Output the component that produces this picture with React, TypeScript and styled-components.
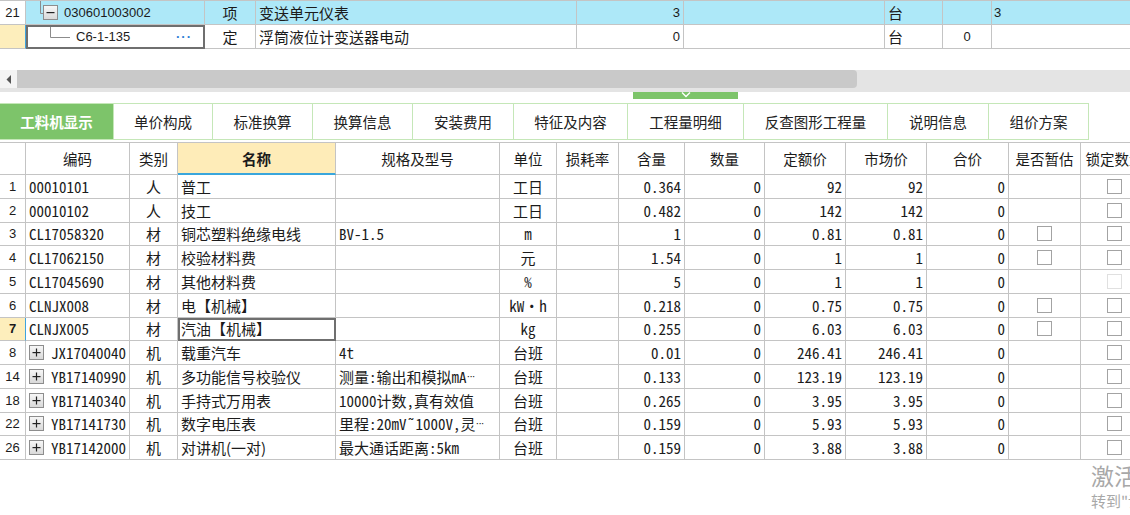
import React from "react";
import styled, { createGlobalStyle } from "styled-components";

const LINE = "#c4c4c4";
const CJK = `"Noto Sans CJK SC", sans-serif`;
const LATIN = `"Liberation Sans", "Noto Sans CJK SC", sans-serif`;
const MONO = `"Noto Sans Mono CJK SC", "Noto Sans CJK SC", monospace`;

type Align = "left" | "center" | "right";
type Font = "cjk" | "latin" | "mono";

const fontOf = (f?: Font) => (f === "latin" ? LATIN : f === "mono" ? MONO : CJK);
const sizeOf = (f?: Font) => (f === "latin" ? "13px" : "15px");
const justify = (a?: Align) => (a === "center" ? "center" : a === "right" ? "flex-end" : "flex-start");

const GlobalStyle = createGlobalStyle`
  html, body { margin: 0; padding: 0; background: #fff; }
  body { font-family: ${CJK}; color: #1b1b1b; }
`;

const Page = styled.div`
  position: relative;
  width: 1130px;
  height: 515px;
  overflow: hidden;
  background: #fff;
`;

/* ---------- upper grid (bill items) ---------- */

const TOP_COLS = "26px 179px 51px 321px 107px 201px 58px 49px 160px";

const TopGrid = styled.div`
  border-top: 1px solid ${LINE};
`;

const TopRow = styled.div<{ $active?: boolean }>`
  display: grid;
  grid-template-columns: ${TOP_COLS};
  height: 24px;
  background: ${(p) => (p.$active ? "#ade8f8" : "#fff")};
`;

const Cell = styled.div<{ $align?: Align; $font?: Font; $bold?: boolean }>`
  box-sizing: border-box;
  display: flex;
  align-items: center;
  justify-content: ${(p) => justify(p.$align)};
  padding: 0 3px;
  border-right: 1px solid ${LINE};
  border-bottom: 1px solid ${LINE};
  white-space: nowrap;
  overflow: hidden;
  font-family: ${(p) => fontOf(p.$font)};
  font-size: ${(p) => sizeOf(p.$font)};
  font-weight: ${(p) => (p.$bold ? 700 : 400)};
  line-height: 1;
`;

const RowNo = styled(Cell)<{ $current?: boolean }>`
  justify-content: center;
  padding: 0;
  font-family: ${LATIN};
  font-size: 13px;
  background: ${(p) => (p.$current ? "#fdeebc" : "#fff")};
  border-right: 1px solid ${(p) => (p.$current ? "#3ea3de" : LINE)};
  font-weight: ${(p) => (p.$current ? 700 : 400)};
`;

const Focused = styled(Cell)`
  outline: 2px solid #6f6f6f;
  outline-offset: -2px;
`;

const TreeCell = styled(Cell)`
  padding: 0;
`;

const MoreDots = styled.span`
  margin-left: auto;
  margin-right: 12px;
  color: #2f7fd6;
  font-family: ${LATIN};
  font-weight: 700;
  font-size: 13px;
  letter-spacing: 1px;
`;

const Ellipsis = styled.span`
  font-family: ${LATIN};
  font-size: 11px;
  letter-spacing: -1px;
`;

const ExpandBox = styled.span`
  box-sizing: border-box;
  width: 15px;
  height: 15px;
  flex: none;
  border: 1px solid #8d8d8d;
  background: linear-gradient(#f7f7f7, #d9d9d9);
  display: flex;
  align-items: center;
  justify-content: center;
  color: #222;
`;

const SignIcon = ({ minus }: { minus?: boolean }) => (
  <svg width="9" height="9" viewBox="0 0 9 9">
    <rect x="0.5" y="4" width="8" height="1.2" fill="#222" />
    {!minus && <rect x="3.9" y="0.5" width="1.2" height="8" fill="#222" />}
  </svg>
);

/* ---------- scrollbar / splitter ---------- */

const HScroll = styled.div`
  margin-top: 21px;
  height: 22px;
  background: #e4e4e4;
  display: flex;
  align-items: flex-start;
`;

const ScrollArrow = styled.div`
  width: 17px;
  height: 18px;
  background: #f4f4f4;
  display: flex;
  align-items: center;
  justify-content: center;
`;

const ScrollThumb = styled.div`
  width: 840px;
  height: 18px;
  background: #c9c9c9;
  border-radius: 0 4px 4px 0;
`;

const Splitter = styled.div`
  height: 11px;
  display: flex;
  align-items: flex-start;
`;

const SplitHandle = styled.div`
  margin-left: 633px;
  width: 105px;
  height: 7px;
  background: #7dc46a;
  display: flex;
  justify-content: center;
`;

/* ---------- tabs ---------- */

const TabStrip = styled.div`
  display: flex;
  height: 37px;
`;

const Tab = styled.div<{ $w: number; $active?: boolean }>`
  box-sizing: border-box;
  width: ${(p) => p.$w}px;
  height: 37px;
  display: flex;
  align-items: center;
  justify-content: center;
  border: 1px solid #c5e7b8;
  border-left: none;
  background: ${(p) => (p.$active ? "#7dc46a" : "#fff")};
  color: ${(p) => (p.$active ? "#fff" : "#222")};
  font-weight: ${(p) => (p.$active ? 700 : 400)};
  font-size: 14.5px;
  white-space: nowrap;
`;

/* ---------- resource grid ---------- */

const LOW_COLS = "26px 104px 48px 158px 164px 57px 62px 66px 80px 81px 81px 82px 72px 68px";

const Table = styled.div`
  margin-top: 2px;
  width: 1149px;
`;

const HeadRow = styled.div`
  display: grid;
  grid-template-columns: ${LOW_COLS};
  height: 33px;
  box-sizing: border-box;
  border-top: 1px solid ${LINE};
`;

const HeadCell = styled.div<{ $hot?: boolean }>`
  box-sizing: border-box;
  display: flex;
  align-items: center;
  justify-content: center;
  border-right: 1px solid ${LINE};
  border-bottom: ${(p) => (p.$hot ? "2px solid #3aa6dc" : `1px solid ${LINE}`)};
  background: ${(p) => (p.$hot ? "#feecb8" : "#fff")};
  font-weight: ${(p) => (p.$hot ? 700 : 400)};
  font-size: 14.5px;
  white-space: nowrap;
  overflow: hidden;
`;

const DataRow = styled.div`
  display: grid;
  grid-template-columns: ${LOW_COLS};
  height: 23.75px;
`;

const CodeCell = styled(Cell)`
  gap: 7px;
`;

const CheckBox = styled.span<{ $dim?: boolean }>`
  box-sizing: border-box;
  width: 15px;
  height: 15px;
  border: 1px solid ${(p) => (p.$dim ? "#e0e0e0" : "#a3a3a3")};
  background: #fff;
`;

const Watermark = styled.div`
  position: absolute;
  left: 1091px;
  top: 459px;
  color: #a8a8a8;
  white-space: nowrap;
  pointer-events: none;
`;

const WmTitle = styled.div`
  font-size: 23px;
  line-height: 32px;
`;

const WmSub = styled.div`
  font-size: 15px;
  line-height: 20px;
`;

type Res = {
  no: string;
  code: string;
  tree?: boolean;
  kind: string;
  name: string;
  spec?: string;
  more?: boolean;
  unit: string;
  qty: string;
  price: string;
  est?: boolean;
  lock?: "on" | "dim";
};

const resources: Res[] = [
  { no: "1", code: "00010101", kind: "人", name: "普工", unit: "工日", qty: "0.364", price: "92" },
  { no: "2", code: "00010102", kind: "人", name: "技工", unit: "工日", qty: "0.482", price: "142" },
  { no: "3", code: "CL17058320", kind: "材", name: "铜芯塑料绝缘电线", spec: "BV-1.5", unit: "m", qty: "1", price: "0.81", est: true },
  { no: "4", code: "CL17062150", kind: "材", name: "校验材料费", unit: "元", qty: "1.54", price: "1", est: true },
  { no: "5", code: "CL17045690", kind: "材", name: "其他材料费", unit: "%", qty: "5", price: "1", lock: "dim" },
  { no: "6", code: "CLNJX008", kind: "材", name: "电【机械】", unit: "kW·h", qty: "0.218", price: "0.75", est: true },
  { no: "7", code: "CLNJX005", kind: "材", name: "汽油【机械】", unit: "kg", qty: "0.255", price: "6.03", est: true },
  { no: "8", code: "JX17040040", tree: true, kind: "机", name: "载重汽车", spec: "4t", unit: "台班", qty: "0.01", price: "246.41" },
  { no: "14", code: "YB17140990", tree: true, kind: "机", name: "多功能信号校验仪", spec: "测量:输出和模拟mA", more: true, unit: "台班", qty: "0.133", price: "123.19" },
  { no: "18", code: "YB17140340", tree: true, kind: "机", name: "手持式万用表", spec: "10000计数,真有效值", unit: "台班", qty: "0.265", price: "3.95" },
  { no: "22", code: "YB17141730", tree: true, kind: "机", name: "数字电压表", spec: "里程:20mV˜1000V,灵", more: true, unit: "台班", qty: "0.159", price: "5.93" },
  { no: "26", code: "YB17142000", tree: true, kind: "机", name: "对讲机(一对)", spec: "最大通话距离:5km", unit: "台班", qty: "0.159", price: "3.88" },
];

const headers = ["", "编码", "类别", "名称", "规格及型号", "单位", "损耗率", "含量", "数量", "定额价", "市场价", "合价", "是否暂估", "锁定数量"];

const tabs: [string, number][] = [
  ["工料机显示", 114],
  ["单价构成", 99],
  ["标准换算", 100],
  ["换算信息", 100],
  ["安装费用", 101],
  ["特征及内容", 114],
  ["工程量明细", 116],
  ["反查图形工程量", 144],
  ["说明信息", 101],
  ["组价方案", 100],
];

const CURRENT = "7";

export default function App() {
  return (
    <Page>
      <GlobalStyle />

      <TopGrid>
        <TopRow $active>
          <RowNo>21</RowNo>
          <TreeCell $font="latin">
            <svg width="17" height="23" viewBox="0 0 17 23">
              <path d="M14.5 0 V12.5 H17" stroke="#8c8c8c" fill="none" />
            </svg>
            <ExpandBox>
              <SignIcon minus />
            </ExpandBox>
            <span style={{ marginLeft: 6 }}>030601003002</span>
          </TreeCell>
          <Cell $align="center">项</Cell>
          <Cell>变送单元仪表</Cell>
          <Cell $align="right" $font="latin">3</Cell>
          <Cell />
          <Cell>台</Cell>
          <Cell />
          <Cell $font="latin" style={{ paddingLeft: 2 }}>3</Cell>
        </TopRow>
        <TopRow>
          <RowNo $current />
          <Focused as={TreeCell} $font="latin">
            <svg width="50" height="23" viewBox="0 0 50 23">
              <path d="M24.5 0 V12.5 H44" stroke="#8c8c8c" fill="none" />
            </svg>
            <span>C6-1-135</span>
            <MoreDots>···</MoreDots>
          </Focused>
          <Cell $align="center">定</Cell>
          <Cell>浮筒液位计变送器电动</Cell>
          <Cell $align="right" $font="latin">0</Cell>
          <Cell />
          <Cell>台</Cell>
          <Cell $align="center" $font="latin">0</Cell>
          <Cell />
        </TopRow>
      </TopGrid>

      <HScroll>
        <ScrollArrow>
          <svg width="6" height="9" viewBox="0 0 6 9">
            <polygon points="5,0 5,9 0.5,4.5" fill="#555" />
          </svg>
        </ScrollArrow>
        <ScrollThumb />
      </HScroll>

      <Splitter>
        <SplitHandle>
          <svg width="12" height="6" viewBox="0 0 12 6">
            <polyline points="2,0.5 6,4.5 10,0.5" stroke="#fff" strokeWidth="1.4" fill="none" />
          </svg>
        </SplitHandle>
      </Splitter>

      <TabStrip>
        {tabs.map(([label, w], i) => (
          <Tab key={label} $w={w} $active={i === 0}>
            {label}
          </Tab>
        ))}
      </TabStrip>

      <Table>
        <HeadRow>
          {headers.map((h, i) => (
            <HeadCell key={i} $hot={h === "名称"}>
              {h}
            </HeadCell>
          ))}
        </HeadRow>
        {resources.map((r) => {
          const cur = r.no === CURRENT;
          const NameCell = cur ? Focused : Cell;
          return (
            <DataRow key={r.no}>
              <RowNo $current={cur}>{r.no}</RowNo>
              <CodeCell $font="mono">
                {r.tree && (
                  <ExpandBox>
                    <SignIcon />
                  </ExpandBox>
                )}
                {r.code}
              </CodeCell>
              <Cell $align="center">{r.kind}</Cell>
              <NameCell>{r.name}</NameCell>
              <Cell $font="mono">
                {r.spec}
                {r.more && <Ellipsis>···</Ellipsis>}
              </Cell>
              <Cell $align="center" $font={/^[\x00-\x7f·]+$/.test(r.unit) ? "mono" : "cjk"}>
                {r.unit}
              </Cell>
              <Cell />
              <Cell $align="right" $font="mono">{r.qty}</Cell>
              <Cell $align="right" $font="mono">0</Cell>
              <Cell $align="right" $font="mono">{r.price}</Cell>
              <Cell $align="right" $font="mono">{r.price}</Cell>
              <Cell $align="right" $font="mono">0</Cell>
              <Cell $align="center">{r.est && <CheckBox />}</Cell>
              <Cell $align="center">
                <CheckBox $dim={r.lock === "dim"} />
              </Cell>
            </DataRow>
          );
        })}
      </Table>

      <Watermark>
        <WmTitle>激活 Windows</WmTitle>
        <WmSub>转到"设置"以激活 Windows。</WmSub>
      </Watermark>
    </Page>
  );
}
